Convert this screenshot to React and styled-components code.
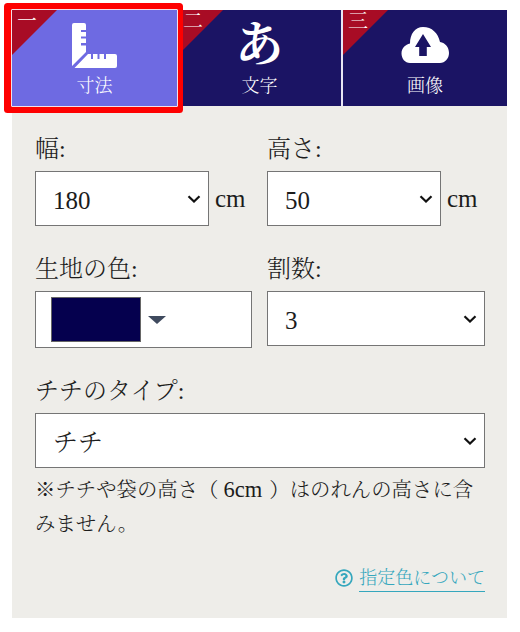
import React from 'react'
import styled, { createGlobalStyle } from 'styled-components'
import { FaRegQuestionCircle } from 'react-icons/fa'

const fontStack = `"Liberation Serif", "Noto Serif CJK JP", "Noto Sans CJK JP", serif`

const chevron = `url("data:image/svg+xml,%3Csvg xmlns='http://www.w3.org/2000/svg' width='14' height='8' viewBox='0 0 14 8'%3E%3Cpath d='M1.500 1.200 7 6.500l5.500-5.300' fill='none' stroke='%23111' stroke-width='2.200'/%3E%3C/svg%3E")`

const GlobalStyle = createGlobalStyle`
    html, body {
        margin: 0;
        padding: 0;
        background: #fff;
    }
    body {
        font-family: ${fontStack};
        font-weight: 300;
        color: #1c1c1c;
        text-spacing-trim: space-all;
    }
`

const tabs = [
    { num: '一', label: '寸法', active: true },
    { num: '二', label: '文字', glyph: 'あ' },
    { num: '三', label: '画像', upload: true },
]

function RulerIcon() {
    return (
        <svg width="45" height="45" viewBox="0 0 45 45">
            <path fill="#fff" d="M2 0H12a2 2 0 0 1 2 2V7H9V9H14V13.500H9V15.500H14V20H9V22.500H14V29L0 43V2a2 2 0 0 1 2-2z" />
            <path fill="#fff" d="M2.500 45 16 31H19V36H21V31H25.500V36H27.500V31H32V36H34V31H43a2 2 0 0 1 2 2V43a2 2 0 0 1-2 2z" />
        </svg>
    )
}

function CloudIcon() {
    return (
        <svg width="48" height="36" viewBox="7 7 48 36">
            <path fill="#fff" d="M16 43C11 43 7.500 38.500 7.500 33.500 7.500 28 11.500 24.500 16 23.500 16 14 21 7 29 7 38 7 44 13 46 22 51.500 23 55 27.500 55 33 55 38.500 51 43 46 43Z" />
            <path fill="#1b1464" d="M29 14 37 27H32.800V36H25.200V27H21Z" />
        </svg>
    )
}

function App() {
    return (
        <Page>
            <GlobalStyle />
            <TabBar>
                {tabs.map((t) => (
                    <Tab key={t.label} $active={t.active}>
                        <Corner />
                        <CornerNum>{t.num}</CornerNum>
                        <IconSlot $top={t.upload ? '4px' : '0'}>
                            {t.active && <RulerIcon />}
                            {t.glyph && <BigGlyph>{t.glyph}</BigGlyph>}
                            {t.upload && <CloudIcon />}
                        </IconSlot>
                        <TabLabel>{t.label}</TabLabel>
                    </Tab>
                ))}
            </TabBar>
            <Panel>
                <Row>
                    <Field>
                        <Label>幅:</Label>
                        <Inline>
                            <Select $width="174px" defaultValue="180">
                                <option>180</option>
                            </Select>
                            <Unit>cm</Unit>
                        </Inline>
                    </Field>
                    <Field>
                        <Label>高さ:</Label>
                        <Inline>
                            <Select $width="174px" defaultValue="50">
                                <option>50</option>
                            </Select>
                            <Unit>cm</Unit>
                        </Inline>
                    </Field>
                </Row>
                <Row>
                    <Field>
                        <Label>生地の色:</Label>
                        <ColorPicker>
                            <Swatch />
                            <Caret />
                        </ColorPicker>
                    </Field>
                    <Field>
                        <Label>割数:</Label>
                        <Select $width="218px" defaultValue="3">
                            <option>3</option>
                        </Select>
                    </Field>
                </Row>
                <Field>
                    <Label>チチのタイプ:</Label>
                    <Select $width="450px" defaultValue="チチ">
                        <option>チチ</option>
                    </Select>
                </Field>
                <Note>
                    ※チチや袋の高さ（<Metric>6cm</Metric>）はのれんの高さに含<br />みません。
                </Note>
                <LinkRow>
                    <HelpIcon size={18} color="#35a7bd" />
                    <ColorLink href="#">指定色について</ColorLink>
                </LinkRow>
            </Panel>
        </Page>
    )
}

const Page = styled.div`
    width: 495px;
    padding: 10px 0 14px 12px;
`
const TabBar = styled.div`
    display: grid;
    grid-template-columns: 166px 165px 164px;
    height: 96px;
`
const Tab = styled.div`
    position: relative;
    display: flex;
    flex-direction: column;
    align-items: center;
    background: ${(p) => (p.$active ? '#6e6ae2' : '#1b1464')};
    color: #fff;
    border-right: 2px solid #e8e6f4;
    &:last-child {
        border-right: 0;
    }
    ${(p) => p.$active && `
        margin: -1px 0 -1px -1px;
        border: 1px solid #f3dfe6;
        box-shadow: -1px 0 0 6px #fe0000;
        border-radius: 1px;
        z-index: 1;
    `}
`
const Corner = styled.span`
    position: absolute;
    top: 0;
    left: 0;
    width: 45px;
    height: 45px;
    background: #a80c25;
    clip-path: polygon(0 0, 100% 0, 0 100%);
`
const CornerNum = styled.span`
    position: absolute;
    top: 0;
    left: 5px;
    font-size: 20px;
    line-height: 22px;
    color: #fff;
`
const IconSlot = styled.div`
    height: ${(p) => (p.$top === '0' ? '53px' : '49px')};
    margin-top: 13px;
    padding-top: ${(p) => p.$top};
    display: flex;
    align-items: flex-start;
    justify-content: center;
`
const BigGlyph = styled.span`
    font-size: 48px;
    font-weight: 700;
    line-height: 48px;
    margin-top: -2px;
`
const TabLabel = styled.span`
    font-size: 18px;
    line-height: 22px;
    margin-top: -1px;
`
const Panel = styled.div`
    background: #eeede9;
    height: 512px;
    box-sizing: border-box;
    padding: 28px 22px 0 23px;
    display: flex;
    flex-direction: column;
`
const Row = styled.div`
    display: grid;
    grid-template-columns: 232px 1fr;
    margin-bottom: 28px;
`
const Field = styled.div`
    display: flex;
    flex-direction: column;
    align-items: flex-start;
`
const Label = styled.label`
    font-size: 24px;
    line-height: 30px;
    margin-bottom: 7px;
`
const Inline = styled.div`
    display: flex;
    align-items: center;
    gap: 6px;
`
const Select = styled.select`
    appearance: none;
    width: ${(p) => p.$width};
    height: 55px;
    box-sizing: border-box;
    padding: 4px 28px 0 17px;
    font-family: ${fontStack};
    font-size: 25px;
    font-weight: 300;
    color: #1c1c1c;
    background: #fff ${chevron} no-repeat right 7px center;
    border: 1px solid #757575;
    border-radius: 0;
`
const Unit = styled.span`
    font-size: 25px;
`
const ColorPicker = styled.div`
    width: 217px;
    height: 57px;
    box-sizing: border-box;
    background: #fff;
    border: 1px solid #757575;
    padding: 5px 15px;
    display: flex;
    align-items: center;
    gap: 7px;
`
const Swatch = styled.div`
    width: 90px;
    height: 45px;
    box-sizing: border-box;
    background: #05004e;
    border: 1px solid #666;
`
const Caret = styled.div`
    width: 0;
    height: 0;
    border-left: 9px solid transparent;
    border-right: 9px solid transparent;
    border-top: 8px solid #3f4a5e;
`
const Note = styled.p`
    margin: 5px 0 0;
    font-size: 20.400px;
    line-height: 34px;
`
const Metric = styled.span`
    font-size: 22.500px;
    padding: 0 7px 0 5px;
`
const LinkRow = styled.div`
    margin-top: 24px;
    display: flex;
    justify-content: flex-end;
    align-items: center;
    gap: 6px;
`
const HelpIcon = styled(FaRegQuestionCircle)`
    margin-bottom: 2px;
`
const ColorLink = styled.a`
    font-size: 18px;
    line-height: 26px;
    color: #35a7bd;
    text-decoration: none;
    border-bottom: 1px solid #35a7bd;
`
export default App
